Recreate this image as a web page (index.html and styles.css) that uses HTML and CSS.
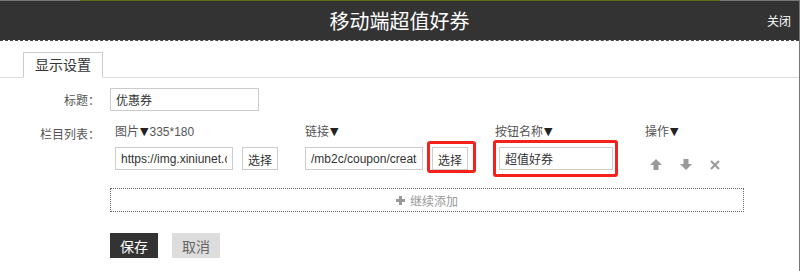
FILE: index.html
```html
<!DOCTYPE html>
<html lang="zh-CN">
<head>
  <meta charset="UTF-8">
  <title>移动端超值好券</title>
  <link rel="stylesheet" href="styles.css">
</head>
<body>
  <div class="dialog">
    <div class="top-line"></div>
    <div class="dialog-head">
      <span></span>
      <h1 class="dialog-title">移动端超值好券</h1>
      <a class="close" href="#">关闭</a>
    </div>
    <div class="head-rule"></div>

    <div class="tabs">
      <span class="tab">显示设置</span>
    </div>

    <div class="form">
      <div class="form-row">
        <label class="form-label">标题：</label>
        <input class="text-input title-input" type="text" value="优惠券">
      </div>

      <div class="form-row list-row">
        <label class="form-label">栏目列表：</label>
        <div class="list-body">
          <div class="cols">
            <div class="col-head">图片<span class="caret">▼</span>335*180</div>
            <div class="col-head">链接<span class="caret">▼</span></div>
            <div class="col-head">按钮名称<span class="caret">▼</span></div>
            <div class="col-head">操作<span class="caret">▼</span></div>

            <div class="cell">
              <input class="text-input" type="text" value="https://img.xiniunet.com/coupon/banner.png">
              <button class="pick-btn">选择</button>
            </div>
            <div class="cell">
              <input class="text-input" type="text" value="/mb2c/coupon/create">
              <!-- red marks are annotations from the screenshot -->
              <span class="mark mark-btn"><button class="pick-btn">选择</button></span>
            </div>
            <div class="cell">
              <span class="mark mark-input"><input class="text-input name-input" type="text" value="超值好券"></span>
            </div>
            <div class="cell ops">
              <svg width="12" height="11" viewBox="0 0 12 11"><path d="M6 0L12 6H8.5V11H3.5V6H0Z" fill="#999"/></svg>
              <svg width="12" height="11" viewBox="0 0 12 11"><path d="M6 11L0 5H3.5V0H8.5V5H12Z" fill="#999"/></svg>
              <svg width="10" height="10" viewBox="0 0 10 10"><path d="M1 1L9 9M9 1L1 9" stroke="#999" stroke-width="2"/></svg>
            </div>
          </div>

          <div class="add-row">
            <svg width="9" height="9" viewBox="0 0 9 9"><path d="M3 0h3v3h3v3H6v3H3V6H0V3h3z" fill="#999"/></svg>
            <span>继续添加</span>
          </div>
        </div>
      </div>

      <div class="form-actions">
        <button class="btn btn-save">保存</button>
        <button class="btn btn-cancel">取消</button>
      </div>
    </div>
  </div>
</body>
</html>
```

FILE: styles.css
```css
body {
  margin: 0;
  background-color: #fff;
  font-family: "Liberation Sans", "Noto Sans CJK SC", sans-serif;
  font-size: 12px;
  color: #333;
}

.dialog {
  width: 800px;
  height: 271px;
  box-sizing: border-box;
  border-right: 1px solid #777;
}

.top-line {
  height: 1px;
  background: linear-gradient(to right, #777 80px, #5b6d12 80px, #5b6d12 720px, #777 720px);
}

.dialog-head {
  display: grid;
  grid-template-columns: 1fr auto 1fr;
  align-items: center;
  height: 39px;
  background-color: #333;
  color: #fff;
}

.dialog-title {
  margin: 0;
  padding-top: 2px;
  font-size: 20px;
  font-weight: normal;
  line-height: 26px;
}

.close {
  justify-self: end;
  margin-right: 8px;
  color: #fff;
  text-decoration: none;
  font-size: 12px;
}

.head-rule {
  border-top: 1px dashed #444;
}

/* tabs */
.tabs {
  display: flex;
  margin-top: 11px;
  padding-left: 23px;
  border-bottom: 1px solid #ddd;
}

.tab {
  height: 24px;
  padding: 0 11px;
  margin-bottom: -1px;
  border: 1px solid #ccc;
  border-bottom-color: #fff;
  font-size: 14px;
  line-height: 24px;
  color: #333;
}

/* form */
.form {
  padding-top: 10px;
}

.form-row {
  display: flex;
  align-items: center;
}

.form-label {
  width: 100px;
  margin-right: 10px;
  text-align: right;
  color: #555;
}

.text-input {
  width: 118px;
  height: 23px;
  box-sizing: border-box;
  padding: 0 5px;
  border: 1px solid #ccc;
  font: 12px "Liberation Sans", "Noto Sans CJK SC", sans-serif;
  color: #333;
  outline: none;
}

.title-input {
  width: 149px;
}

.list-row {
  align-items: flex-start;
  margin-top: 12px;
}

.list-row .form-label {
  padding-top: 3px;
  line-height: 18px;
}

.cols {
  display: grid;
  grid-template-columns: 190px 190px 150px auto;
  row-gap: 5px;
  padding-left: 5px;
}

.col-head {
  line-height: 18px;
  color: #555;
}

.caret {
  position: relative;
  top: -1px;
  margin: 0 1px;
  font-family: "DejaVu Sans", sans-serif;
  font-size: 11px;
  color: #222;
}

.cell {
  display: flex;
  align-items: center;
  gap: 9px;
  height: 23px;
}

.pick-btn {
  width: 36px;
  height: 23px;
  padding: 2px 0 0;
  border: 1px solid #ccc;
  background-color: #fff;
  font: 12px "Noto Sans CJK SC", sans-serif;
  color: #333;
}

.name-input {
  width: 114px;
}

.ops {
  gap: 18px;
  padding-left: 5px;
  padding-top: 6px;
}

/* red annotation boxes */
.mark {
  position: relative;
  display: flex;
}

.mark::after {
  content: "";
  position: absolute;
  border: 3px solid #f5221b;
  border-radius: 3px;
}

.mark-btn::after {
  top: -6px;
  left: -5px;
  right: -8px;
  bottom: -3px;
}

.mark-input {
  margin-left: 4px;
}

.mark-input::after {
  top: -7px;
  left: -6px;
  right: -5px;
  bottom: -7px;
}

.add-row {
  display: flex;
  align-items: center;
  justify-content: center;
  gap: 5px;
  width: 634px;
  height: 24px;
  box-sizing: border-box;
  margin-top: 12px;
  border: 1px dotted #666;
  font-family: "Noto Sans CJK SC", sans-serif;
  color: #999;
}

.form-actions {
  display: flex;
  gap: 14px;
  margin-top: 21px;
  padding-left: 110px;
}

.btn {
  width: 48px;
  height: 25px;
  padding: 0;
  border: 0;
  font: 14px "Noto Sans CJK SC", sans-serif;
}

.btn-save {
  background-color: #333;
  color: #fff;
}

.btn-cancel {
  background-color: #ddd;
  color: #666;
}
```
